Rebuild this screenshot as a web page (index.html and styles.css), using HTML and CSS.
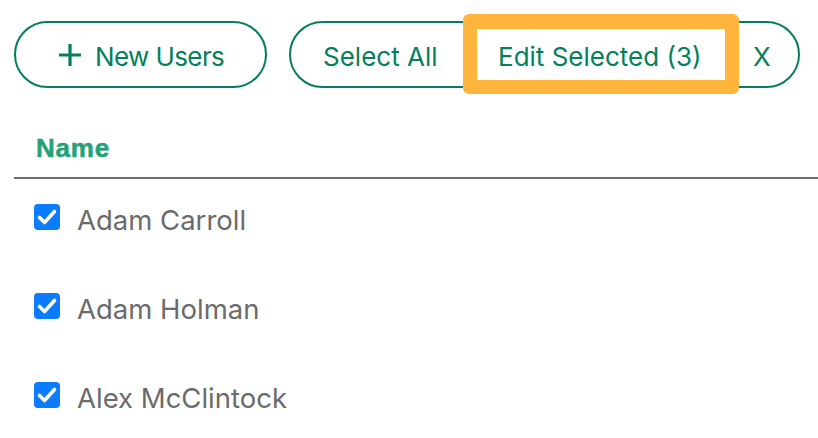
FILE: index.html
```html
<!DOCTYPE html>
<html lang="en">
<head>
<meta charset="utf-8">
<title>Users</title>
<link rel="stylesheet" href="styles.css">
</head>
<body>
<div class="toolbar">
  <button class="btn-new" type="button">
    <svg class="plus" width="24" height="24" viewBox="0 0 24 24" aria-hidden="true"><path d="M12 1v22M1 12h22" stroke="currentColor" stroke-width="3.2" fill="none"/></svg>
    <span class="label">New Users</span>
  </button>
  <div class="group">
    <button class="seg seg-select" type="button"><span class="label">Select All</span></button>
    <button class="seg seg-edit" type="button"><span class="label">Edit Selected (3)</span></button>
    <button class="seg seg-x" type="button"><span class="label">X</span></button>
  </div>
</div>
<div class="table">
  <div class="thead">Name</div>
  <ul class="rows">
    <li class="row"><span class="check"><svg width="26" height="26" viewBox="0 0 26 26" aria-hidden="true"><path d="M5.5 13.5l5 5 10-11" stroke="#fff" stroke-width="3.6" fill="none" stroke-linecap="round" stroke-linejoin="round"/></svg></span><span class="name">Adam Carroll</span></li>
    <li class="row"><span class="check"><svg width="26" height="26" viewBox="0 0 26 26" aria-hidden="true"><path d="M5.5 13.5l5 5 10-11" stroke="#fff" stroke-width="3.6" fill="none" stroke-linecap="round" stroke-linejoin="round"/></svg></span><span class="name">Adam Holman</span></li>
    <li class="row"><span class="check"><svg width="26" height="26" viewBox="0 0 26 26" aria-hidden="true"><path d="M5.5 13.5l5 5 10-11" stroke="#fff" stroke-width="3.6" fill="none" stroke-linecap="round" stroke-linejoin="round"/></svg></span><span class="name">Alex McClintock</span></li>
  </ul>
</div>
</body>
</html>
```

FILE: styles.css
```css
* { box-sizing: border-box; }
html, body { margin: 0; padding: 0; background: #fff; }
body { font-family: Inter, "Noto Sans", sans-serif; overflow: hidden; }

.toolbar {
  display: flex;
  align-items: center;
  gap: 22px;
  padding: 21px 0 0 14px;
}

.btn-new, .seg {
  font-family: Inter, "Noto Sans", sans-serif;
  font-size: 26px;
  font-weight: 400;
  color: #047f5b;
  background: #fff;
  cursor: pointer;
}
.label { display: block; padding-top: 4px; }

.btn-new {
  display: flex;
  align-items: center;
  gap: 13px;
  width: 253px;
  height: 67px;
  padding: 0 0 0 42px;
  border: 2px solid #047f5b;
  border-radius: 34px;
}
.btn-new .label { letter-spacing: -0.6px; }
.plus { display: block; flex: none; margin-top: 1px; }

.group {
  display: flex;
  width: 511px;
  height: 67px;
  border: 2px solid #047f5b;
  border-radius: 34px;
}
.seg {
  display: flex;
  align-items: center;
  border: 0;
  background: transparent;
  padding: 0;
  height: 100%;
  white-space: nowrap;
}
.seg-select { width: 172px; padding-left: 32px; }
.seg-edit { width: 276px; padding-left: 35px; position: relative; }
.seg-edit::after {
  content: "";
  position: absolute;
  top: -9px;
  bottom: -8px;
  left: 0;
  right: 0;
  border: 14px solid #ffb43c;
  border-top-width: 15px;
  border-radius: 6px;
}
.seg-x { width: 59px; padding-left: 14px; }

.table { margin: 45px 0 0 14px; }
.thead {
  font-family: "Liberation Sans", Arial, sans-serif;
  font-weight: 700;
  font-size: 26px;
  line-height: 30px;
  letter-spacing: 0.8px;
  -webkit-text-stroke: 0.5px #24a277;
  color: #24a277;
  padding: 0 0 14px 22px;
  border-bottom: 2px solid #6e6e6e;
}
.rows {
  list-style: none;
  margin: 0;
  padding: 25px 0 0 20px;
  display: flex;
  flex-direction: column;
  gap: 63px;
}
.row {
  display: flex;
  align-items: center;
  gap: 17px;
  height: 26px;
}
.check {
  width: 26px;
  height: 26px;
  flex: none;
  background: #0b7bff;
  border-radius: 4px;
}
.check svg { display: block; }
.name {
  font-size: 27.5px;
  color: #6b6b6b;
  line-height: 26px;
  padding-top: 6px;
}
```
